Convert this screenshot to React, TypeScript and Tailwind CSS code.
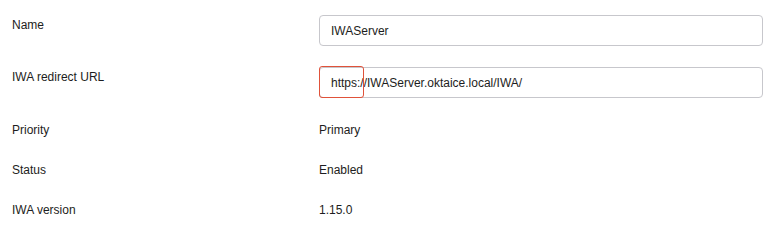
const rows = [
  { label: "Priority", value: "Primary" },
  { label: "Status", value: "Enabled" },
  { label: "IWA version", value: "1.15.0" },
];

export default function App() {
  return (
    <div className="w-[781px] h-[242px] bg-white text-[#1d1d21] text-[12px] leading-[18px] font-['Liberation_Sans',Arial,sans-serif] pl-3 pt-[15px]">
      <div className="flex items-start">
        <div className="w-[307px] pt-px">Name</div>
        <div className="w-[444px] h-[31px] rounded-[4px] border border-[#c7c7cc] px-[11px] flex items-center">
          IWAServer
        </div>
      </div>

      <div className="flex items-start mt-[21px]">
        <div className="w-[307px] pt-px">IWA redirect URL</div>
        <div className="relative w-[444px] h-[31px] rounded-[4px] border border-[#c7c7cc] px-[11px] flex items-center">
          https://IWAServer.oktaice.local/IWA/
          {/* highlight annotation */}
          <div className="absolute left-[-1px] top-[-2px] w-[45px] h-[32px] rounded-[3px] border border-[#e0523a]" />
        </div>
      </div>

      <div className="flex flex-col gap-[22px] mt-[23px]">
        {rows.map((r) => (
          <div key={r.label} className="flex">
            <div className="w-[307px]">{r.label}</div>
            <div>{r.value}</div>
          </div>
        ))}
      </div>
    </div>
  );
}
